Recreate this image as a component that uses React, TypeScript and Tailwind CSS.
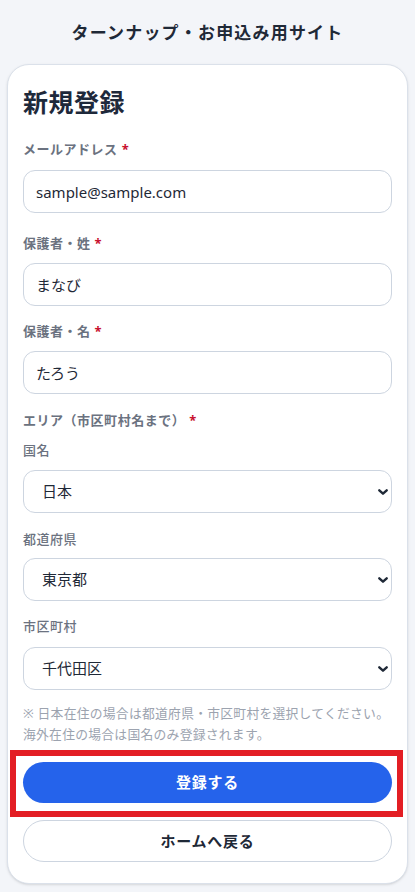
import type { ReactNode } from "react";

const FONT = { fontFamily: '"Noto Sans", "Noto Sans CJK JP", sans-serif' };

/** Bold field label with the red required mark. */
function Label({ children, required, className = "" }: { children: ReactNode; required?: boolean; className?: string }) {
  return (
    <div className={`text-[13px] font-bold leading-5 tracking-[0.04em] text-[#6b7280] ${className}`}>
      {children}
      {required && <span className="ml-1 text-[#c8102e]">*</span>}
    </div>
  );
}

/** Sub label under the area heading (国名 / 都道府県 / 市区町村). */
function SubLabel({ children, className = "" }: { children: ReactNode; className?: string }) {
  return <div className={`text-[13px] font-medium leading-5 tracking-[0.04em] text-[#6b7280] ${className}`}>{children}</div>;
}

function TextInput({ value, className = "" }: { value: string; className?: string }) {
  return (
    <input
      readOnly
      value={value}
      className={`block h-[43px] w-full rounded-xl border border-[#cdd5e0] bg-white px-3 text-[15px] text-[#1f2937] outline-none ${className}`}
    />
  );
}

function Select({ value, className = "" }: { value: string; className?: string }) {
  return (
    <div className={`relative ${className}`}>
      <select
        value={value}
        onChange={() => {}}
        className="block h-[43px] w-full appearance-none rounded-xl border border-[#cdd5e0] bg-white pl-[18px] pr-8 text-[15px] text-[#1f2937] outline-none"
      >
        <option value={value}>{value}</option>
      </select>
      {/* chevron like the native select arrow */}
      <svg
        viewBox="0 0 10 6"
        className="pointer-events-none absolute right-[4px] top-1/2 h-[6px] w-[10px] -translate-y-1/2"
        fill="none"
        stroke="#1f2937"
        strokeWidth="2.4"
        strokeLinecap="round"
        strokeLinejoin="round"
      >
        <path d="M1.3 1.3 5 4.7 8.7 1.3" />
      </svg>
    </div>
  );
}

export default function App() {
  return (
    <div className="min-h-screen bg-[#f3f5f9] pb-2" style={FONT}>
      <header className="flex h-16 items-center justify-center pt-[2px]">
        <h1 className="text-[17px] font-bold leading-6 tracking-[0.07em] text-[#1f2937]">ターンナップ・お申込み用サイト</h1>
      </header>

      <main className="mx-[7px] rounded-[22px] border border-[#dbe1ea] bg-white px-[15px] pb-[21px] pt-[21px] shadow-sm">
        <h2 className="text-[25px] font-bold leading-8 tracking-[0.02em] text-[#1e293b]">新規登録</h2>

        <Label required className="mt-[21px]">メールアドレス</Label>
        <TextInput value="sample@sample.com" className="mt-[11px]" />

        <Label required className="mt-5">保護者・姓</Label>
        <TextInput value="まなび" className="mt-[10px]" />

        <Label required className="mt-[15px]">保護者・名</Label>
        <TextInput value="たろう" className="mt-[10px]" />

        <Label required className="mt-4">エリア（市区町村名まで）</Label>

        <SubLabel className="mt-[10px]">国名</SubLabel>
        <Select value="日本" className="mt-[10px]" />

        <SubLabel className="mt-4">都道府県</SubLabel>
        <Select value="東京都" className="mt-[9px]" />

        <SubLabel className="mt-[15px]">市区町村</SubLabel>
        <Select value="千代田区" className="mt-[11px]" />

        <p className="mt-[13px] text-[12.8px] leading-[21px] tracking-[0.02em] text-[#9ca3af]">
          ※ 日本在住の場合は都道府県・市区町村を選択してください。
          <br />
          海外在住の場合は国名のみ登録されます。
        </p>

        <div className="relative mt-[17px]">
          <button className="block h-[41px] w-full rounded-full bg-[#2563eb] text-[15px] font-bold tracking-[0.05em] text-white">
            登録する
          </button>
          {/* red highlight annotation */}
          <div className="pointer-events-none absolute -bottom-[14px] -left-[13px] -right-[11px] -top-[12px] border-[6px] border-[#e31e24]" />
        </div>

        <button className="mt-[17px] block h-[42px] w-full rounded-full border border-[#cdd5e0] bg-white text-[15px] font-bold tracking-[0.05em] text-[#1f2937]">
          ホームへ戻る
        </button>
      </main>
    </div>
  );
}
